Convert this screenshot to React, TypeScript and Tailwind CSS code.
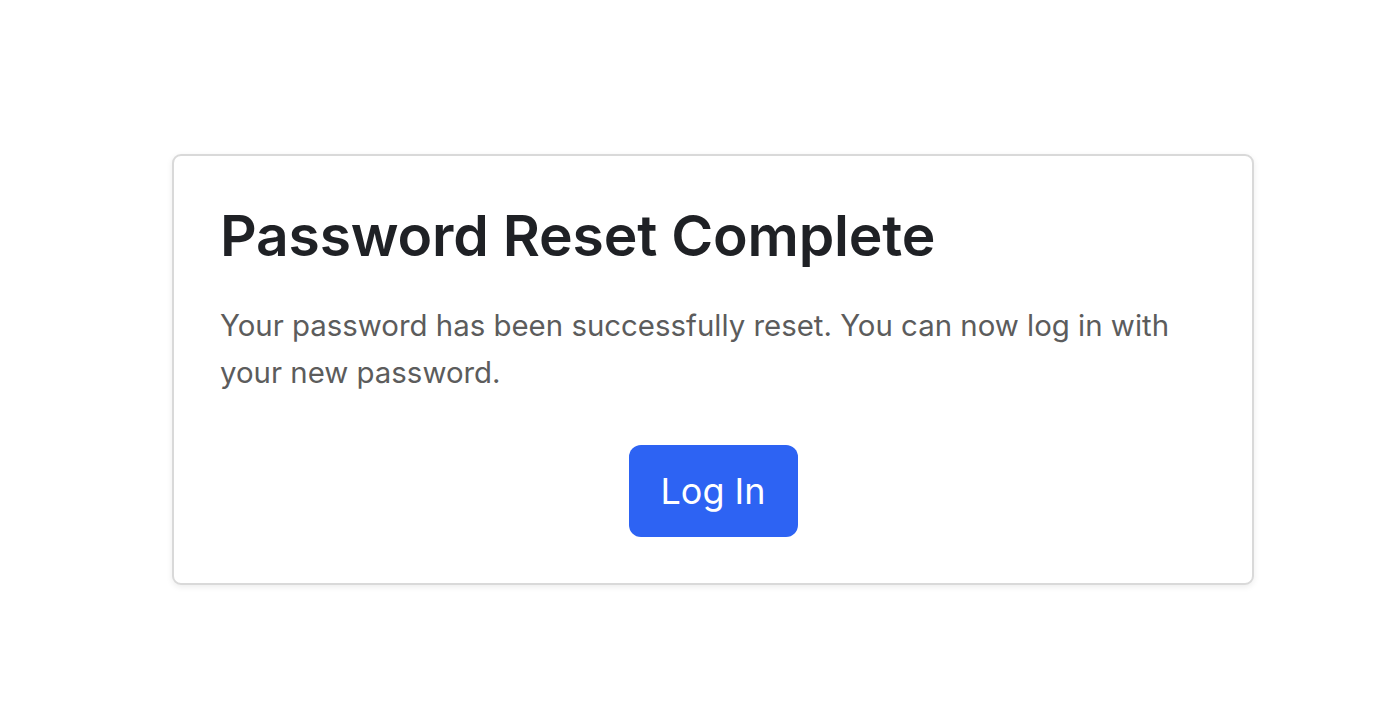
export default function App() {
  return (
    <div
      className="min-h-[718px] w-[1400px] bg-white pt-[154px] pl-[172px]"
      style={{ fontFamily: 'Inter, "Noto Sans", sans-serif' }}
    >
      <div className="w-[1082px] h-[431px] rounded-[9px] border-2 border-[#d9d9d9] bg-white px-[46px] pt-[46px] shadow-[0_2px_6px_rgba(0,0,0,0.08)]">
        <h1 className="text-[57px] leading-[68px] font-semibold text-[#1f2125] tracking-[-0.2px]">
          Password Reset Complete
        </h1>
        <p className="mt-[32px] text-[29.4px] leading-[47px] text-[#5c5c5c]">
          Your password has been successfully reset. You can now log in with your new password.
        </p>
        <div className="mt-[49px] flex justify-center">
          <button className="h-[92px] w-[169px] rounded-[12px] bg-[#2d63f3] text-[36px] text-white">
            Log In
          </button>
        </div>
      </div>
    </div>
  );
}
